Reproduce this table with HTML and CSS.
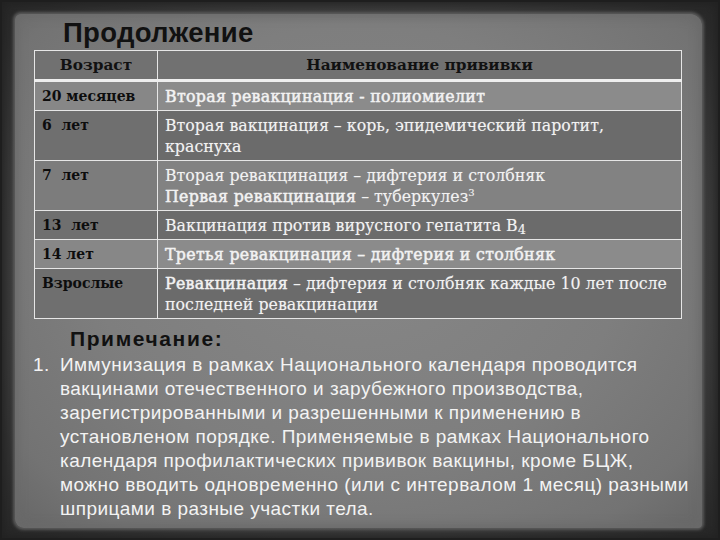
FILE: index.html
```html
<!DOCTYPE html>
<html lang="ru">
<head>
<meta charset="utf-8">
<title>Продолжение</title>
<link rel="stylesheet" href="styles.css">
</head>
<body>
<div class="frame">
  <div class="paper">
    <h1 class="title">Продолжение</h1>
    <table class="sched">
      <colgroup><col class="c-age"><col class="c-name"></colgroup>
      <thead>
        <tr class="head"><th>Возраст</th><th>Наименование прививки</th></tr>
      </thead>
      <tbody>
        <tr class="light"><td class="age">20 месяцев</td><td class="b">Вторая ревакцинация - полиомиелит</td></tr>
        <tr class="dark"><td class="age">6&nbsp; лет</td><td>Вторая вакцинация – корь, эпидемический паротит,<br>краснуха</td></tr>
        <tr class="mid"><td class="age">7&nbsp; лет</td><td>Вторая ревакцинация – дифтерия и столбняк<br><span class="b">Первая ревакцинация</span> – туберкулез<sup>3</sup></td></tr>
        <tr class="dark"><td class="age">13&nbsp; лет</td><td>Вакцинация против вирусного гепатита В<sub>4</sub></td></tr>
        <tr class="light"><td class="age">14 лет</td><td class="b">Третья ревакцинация – дифтерия и столбняк</td></tr>
        <tr class="dark"><td class="age">Взрослые</td><td><span class="b">Ревакцинация</span> – дифтерия и столбняк каждые 10 лет после<br>последней ревакцинации</td></tr>
      </tbody>
    </table>
    <h2 class="note-title">Примечание:</h2>
    <div class="notes">
      <span class="num">1.</span>
      <p class="note-text">Иммунизация в рамках Национального календаря проводится<br>вакцинами отечественного и зарубежного производства,<br>зарегистрированными и разрешенными к применению в<br>установленом порядке. Применяемые в рамках Национального<br>календаря профилактических прививок вакцины, кроме БЦЖ,<br>можно вводить одновременно (или с интервалом 1 месяц) разными<br>шприцами в разные участки тела.</p>
    </div>
  </div>
</div>
</body>
</html>
```

FILE: styles.css
```css
html, body {
  margin: 0;
  padding: 0;
}
body {
  width: 720px;
  height: 540px;
  overflow: hidden;
  background: #2e2e2e;
}
.frame {
  width: 720px;
  height: 540px;
  box-sizing: border-box;
  padding: 14px 18px 12px 15px;
  background: radial-gradient(ellipse at center, #4a4a4a 0%, #3a3a3a 70%, #262626 100%);
  box-shadow: inset 0 0 0 2px #1e1e1e, inset 0 0 8px 4px #222;
}
.paper {
  height: 100%;
  box-sizing: border-box;
  background: radial-gradient(ellipse at 50% 45%, #878787 0%, #7e7e7e 55%, #737373 85%, #666 100%);
  box-shadow: 0 0 3px 2px #5a5a5a, inset 0 0 10px 3px #6a6a6a;
  border-radius: 6px 12px 4px 9px;
  padding-top: 3px;
}
.title {
  margin: 0 0 0 48px;
  font-family: "Liberation Sans", Arial, sans-serif;
  font-weight: bold;
  font-size: 27.5px;
  line-height: 32px;
  color: #111;
  letter-spacing: 0.3px;
}
.sched {
  margin: 1px 0 0 19px;
  width: 648px;
  border-collapse: collapse;
  font-family: "DejaVu Serif", "Liberation Serif", serif;
  font-size: 15.8px;
  line-height: 21px;
}
.c-age { width: 123px; }
.sched th, .sched td {
  border: 1px solid #e6e6e6;
  padding: 4px 7px 3px;
  text-align: left;
  vertical-align: top;
}
.sched th {
  background: #717171;
  color: #111;
  font-weight: bold;
  text-align: center;
  font-size: 15.3px;
}
.sched thead tr { border-bottom: 3px solid #eeeeee; }
.sched td {
  color: #f2f2f2;
  text-shadow: 0 0 1px rgba(255,255,255,0.35);
}
.sched td.age {
  color: #0d0d0d;
  font-weight: bold;
  font-size: 14px;
  text-shadow: none;
}
.sched .b { -webkit-text-stroke: 0.4px #f2f2f2; letter-spacing: 0.3px; }
.light td { background: #8b8b8b; }
.light td.age { background: #878787; }
.dark td { background: #6b6b6b; }
.dark td.age { background: #6f6f6f; }
.mid td { background: #828282; }
.mid td.age { background: #7c7c7c; }
.sched sup { font-size: 10px; line-height: 0; }
.sched sub { font-size: 13px; line-height: 0; vertical-align: -3px; }
.note-title {
  margin: 9px 0 0 55px;
  font-family: "Liberation Sans", Arial, sans-serif;
  font-weight: bold;
  font-size: 21px;
  line-height: 22px;
  color: #111;
  letter-spacing: 1.6px;
}
.notes {
  display: flex;
  margin: 3px 0 0 18px;
  font-family: "Liberation Sans", Arial, sans-serif;
  font-size: 19px;
  line-height: 24px;
  color: #f3f3f3;
  letter-spacing: 0.45px;
}
.num {
  width: 27px;
  flex: none;
}
.note-text {
  margin: 0;
  white-space: nowrap;
}
```
